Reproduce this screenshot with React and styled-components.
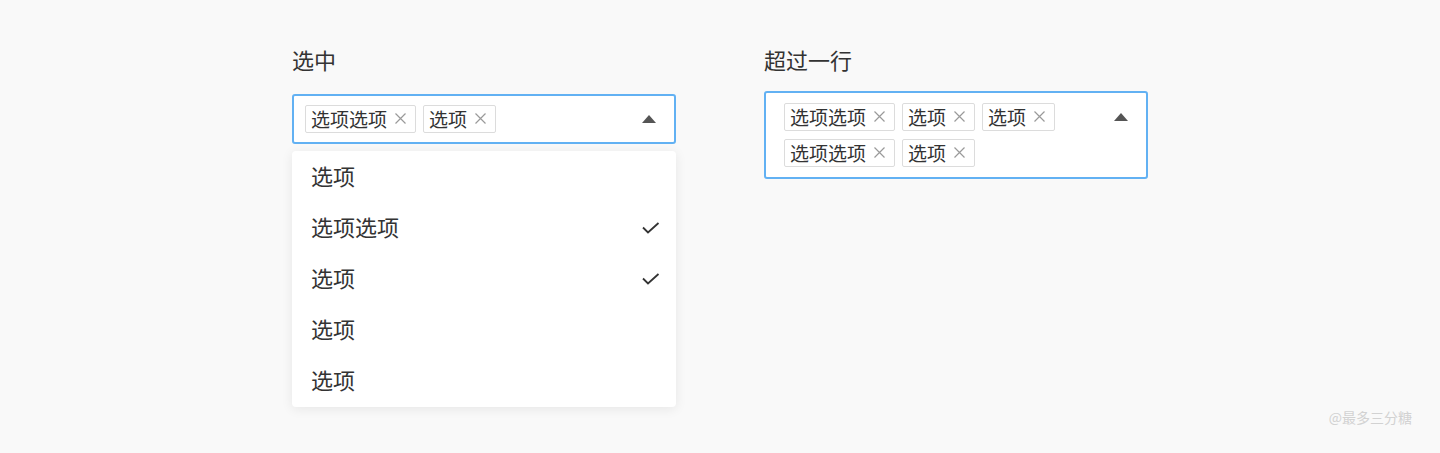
import React from "react";
import styled, { createGlobalStyle } from "styled-components";

const colors = {
	page: "#f9f9f9",
	text: "#333333",
	focus: "#62b1f3",
	tagBorder: "#dcdcdc",
	close: "#9a9a9a",
	arrow: "#555555",
	mark: "#d2d2d2"
};

const GlobalStyle = createGlobalStyle`
	html, body {
		margin: 0;
		padding: 0;
		background: ${colors.page};
	}
	body {
		font-family: "Noto Sans CJK SC", "Noto Sans", sans-serif;
		color: ${colors.text};
	}
`;

const Page = styled.div`
	display: flex;
	flex-direction: column;
	height: 453px;
	box-sizing: border-box;
	padding-top: 44px;
`;

const Columns = styled.div`
	display: flex;
	justify-content: center;
	gap: 88px;
	flex: 1;
`;

const Field = styled.div`
	display: flex;
	flex-direction: column;
	width: 384px;
`;

const Label = styled.div`
	font-size: 22px;
	line-height: 30px;
	margin-bottom: ${(p) => p.$gap}px;
`;

const Anchor = styled.div`
	position: relative;
`;

const SelectBox = styled.div`
	display: flex;
	align-items: ${(p) => (p.$wrap ? "flex-start" : "center")};
	box-sizing: border-box;
	width: 100%;
	padding: ${(p) => p.$padding};
	background: #fff;
	border: 2px solid ${colors.focus};
	border-radius: 3px;
`;

const Tags = styled.div`
	display: flex;
	flex-wrap: wrap;
	flex: 1;
	gap: 8px 7px;
	margin-right: 14px;
`;

const Tag = styled.span`
	display: inline-flex;
	align-items: center;
	gap: 8px;
	height: 28px;
	box-sizing: border-box;
	padding: 0 9px 1px 5px;
	font-size: 19px;
	line-height: 25px;
	background: #fff;
	border: 1px solid ${colors.tagBorder};
	border-radius: 2px;
`;

const Arrow = styled.svg`
	flex: none;
	margin-top: ${(p) => p.$offset || 0}px;
`;

const Menu = styled.ul`
	position: absolute;
	top: calc(100% + 7px);
	left: 0;
	right: 0;
	margin: 0;
	padding: 0;
	list-style: none;
	background: #fff;
	border-radius: 4px;
	box-shadow: 0 2px 12px rgba(0, 0, 0, 0.08);
`;

const Option = styled.li`
	display: flex;
	align-items: center;
	justify-content: space-between;
	height: 51.2px;
	box-sizing: border-box;
	padding: 0 16px 4px 19px;
	font-size: 22px;
`;

const Check = styled.svg`
	margin-top: 4px;
`;

const Footer = styled.div`
	padding: 0 28px 26px 0;
	text-align: right;
	font-size: 14px;
	color: ${colors.mark};
`;

const CloseIcon = () => (
	<svg width="11" height="11" viewBox="0 0 11 11">
		<path d="M0.5 0.5L10.5 10.5M10.5 0.5L0.5 10.5" stroke={colors.close} strokeWidth="1.2" />
	</svg>
);

const CheckIcon = () => (
	<Check width="18" height="12" viewBox="0 0 18 12">
		<path d="M1 5.5L6 10.5L16.5 1" fill="none" stroke={colors.text} strokeWidth="1.8" />
	</Check>
);

const Caret = ({ offset }) => (
	<Arrow $offset={offset} width="14" height="8" viewBox="0 0 14 8">
		<polygon points="0,8 7,0 14,8" fill={colors.arrow} />
	</Arrow>
);

const options = [
	{ label: "选项" },
	{ label: "选项选项", checked: true },
	{ label: "选项", checked: true },
	{ label: "选项" },
	{ label: "选项" }
];

const TagList = ({ items }) => (
	<Tags>
		{items.map((t, i) => (
			<Tag key={i}>
				{t}
				<CloseIcon />
			</Tag>
		))}
	</Tags>
);

const App = () => (
	<Page>
		<GlobalStyle />
		<Columns>
			<Field>
				<Label $gap={20}>选中</Label>
				<Anchor>
					<SelectBox $padding="9px 18px 9px 11px">
						<TagList items={["选项选项", "选项"]} />
						<Caret />
					</SelectBox>
					<Menu>
						{options.map((o, i) => (
							<Option key={i}>
								{o.label}
								{o.checked && <CheckIcon />}
							</Option>
						))}
					</Menu>
				</Anchor>
			</Field>

			<Field>
				<Label $gap={17}>超过一行</Label>
				<SelectBox $wrap $padding="10px 18px 10px 18px">
					<TagList items={["选项选项", "选项", "选项", "选项选项", "选项"]} />
					<Caret offset={10} />
				</SelectBox>
			</Field>
		</Columns>
		<Footer>@最多三分糖</Footer>
	</Page>
);

export default App;
